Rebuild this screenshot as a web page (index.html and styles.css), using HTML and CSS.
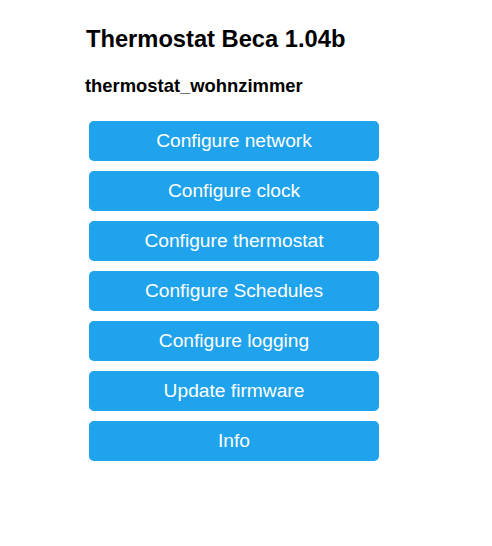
FILE: index.html
```html
<!DOCTYPE html>
<html>
<head>
<meta charset="utf-8">
<title>Thermostat Beca 1.04b</title>
<link rel="stylesheet" href="styles.css">
</head>
<body>
<div class="page">
  <h2 class="title">Thermostat Beca 1.04b</h2>
  <h3 class="subtitle">thermostat_wohnzimmer</h3>
  <div class="menu">
    <button class="btn">Configure network</button>
    <button class="btn">Configure clock</button>
    <button class="btn">Configure thermostat</button>
    <button class="btn">Configure Schedules</button>
    <button class="btn">Configure logging</button>
    <button class="btn">Update firmware</button>
    <button class="btn">Info</button>
  </div>
</div>
</body>
</html>
```
FILE: styles.css
```css
html, body {
  margin: 0;
  padding: 0;
  background: #fff;
}
body {
  font-family: "Liberation Sans", Arial, sans-serif;
  color: #000;
}
.page {
  display: flex;
  flex-direction: column;
  align-items: flex-start;
  padding: 25px 0 0 86px;
}
.title {
  margin: 0;
  font-size: 23.7px;
  line-height: 28px;
  font-weight: bold;
}
.subtitle {
  margin: 22px 0 0 -1px;
  font-size: 18.4px;
  line-height: 22px;
  font-weight: bold;
}
.menu {
  display: flex;
  flex-direction: column;
  gap: 10px;
  margin: 24px 0 0 3px;
}
.btn {
  width: 290px;
  height: 40px;
  border: 0;
  border-radius: 4.8px;
  background-color: #1fa3ec;
  color: #fff;
  font-family: "Liberation Sans", Arial, sans-serif;
  font-size: 19.2px;
  line-height: 40px;
  padding: 0;
  text-align: center;
}
```
